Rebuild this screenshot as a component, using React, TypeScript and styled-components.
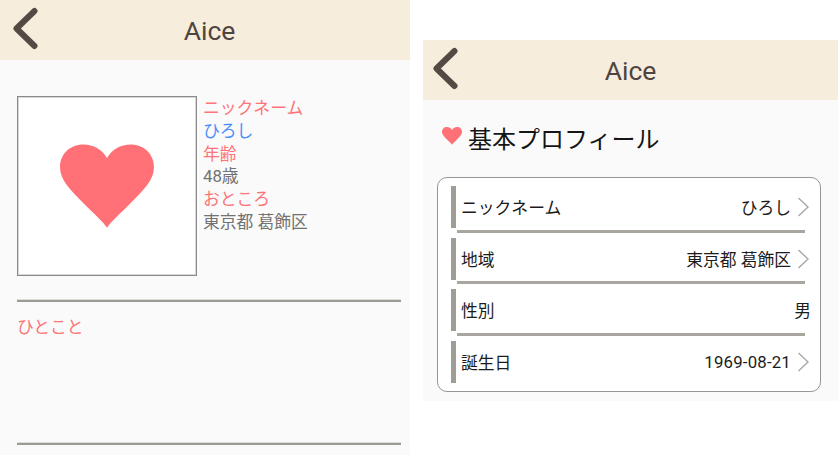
import styled, { createGlobalStyle } from 'styled-components';

const GlobalStyle = createGlobalStyle`
  html, body {
    margin: 0;
    padding: 0;
    background: #ffffff;
    font-family: Roboto, "Noto Sans CJK JP", sans-serif;
  }
`;

const Page = styled.div`
  display: flex;
  align-items: flex-start;
  gap: 13px;
  width: 838px;
  height: 455px;
  overflow: hidden;
`;

const LeftScreen = styled.section`
  width: 410px;
  height: 455px;
  flex: none;
  background: #fafafa;
`;

const RightScreen = styled.section`
  width: 415px;
  height: 361px;
  flex: none;
  margin-top: 40px;
  background: #fafafa;
`;

const Header = styled.header<{ $shift: number }>`
  position: relative;
  box-sizing: border-box;
  height: 60px;
  display: flex;
  align-items: center;
  justify-content: center;
  padding-left: ${(p) => p.$shift}px;
  background: #f6eddd;
  color: #4f453e;
  font-size: 26.5px;
`;

const BackIcon = styled.svg<{ $left: number }>`
  position: absolute;
  left: ${(p) => p.$left}px;
  top: 7px;
  width: 28px;
  height: 44px;
`;

const ProfileRow = styled.div`
  display: flex;
  gap: 6px;
  padding: 36px 0 0 17px;
`;

const Photo = styled.div`
  box-sizing: border-box;
  width: 180px;
  height: 180px;
  display: flex;
  align-items: center;
  justify-content: center;
  background: #ffffff;
  border: 1px solid #8a8a8a;
  box-shadow: inset 0 0 0 1px #d8d8d8;
`;

const BigHeart = styled.svg`
  width: 94px;
  height: 85px;
  filter: blur(0.7px);
`;

const Facts = styled.div`
  padding-top: 1px;
  font-size: 16.8px;
  line-height: 22.8px;
`;

const Fact = styled.div<{ $tone: 'label' | 'name' | 'value' }>`
  color: ${(p) =>
    p.$tone === 'label' ? '#ff7479' : p.$tone === 'name' ? '#4a8ffa' : '#727272'};
`;

const Rule = styled.hr<{ $top: number }>`
  height: 2px;
  margin: ${(p) => p.$top}px 9px 0 17px;
  border: 0;
  background: #9c9a94;
  box-shadow: 0 -1px 0 #dedcd8;
`;

const Comment = styled.div`
  margin: 14px 0 0 17px;
  height: 127px;
  color: #ff7479;
  font-size: 16.8px;
  line-height: 22px;
`;

const Heading = styled.h2`
  display: flex;
  align-items: center;
  gap: 6px;
  height: 38px;
  margin: 0;
  padding: 18px 0 0 19px;
  color: #151515;
  font-size: 24px;
  font-weight: 400;
`;

const SmallHeart = styled.svg`
  width: 20px;
  height: 18px;
  margin-top: -2px;
`;

const Card = styled.div`
  box-sizing: border-box;
  width: 384px;
  height: 215px;
  margin: 21px 0 0 14px;
  padding: 8px 9px 0 13px;
  background: #ffffff;
  border: 1px solid #969696;
  border-radius: 10px;
`;

const Row = styled.div`
  display: flex;
  flex-direction: column;
  height: 51.5px;
`;

const RowBody = styled.div`
  display: flex;
  align-items: center;
  height: 42px;
  padding-left: 5px;
  border-left: 5px solid #9f9d96;
  color: #1c1c1c;
  font-size: 16.8px;
`;

const RowLabel = styled.span`
  flex: 1;
`;

const RowValue = styled.span<{ $numeric?: boolean }>`
  letter-spacing: ${(p) => (p.$numeric ? '0.2px' : '0')};
`;

const Chevron = styled.svg`
  width: 14px;
  height: 22px;
  margin-left: 5px;
  margin-right: 1px;
`;

const RowRule = styled.div`
  height: 3px;
  margin: 1.5px 6px 0 6px;
  background: #a8a69f;
`;

const heartPath =
  'M48 85 C44 79 36 72 24 60 C10 46 0 36 0 23 C0 10 10 0 24 0 C34 0 43 5 48 14 C53 5 62 0 72 0 C86 0 96 10 96 23 C96 36 86 46 72 60 C60 72 52 79 48 85 Z';

const Back = ({ left }: { left: number }) => (
  <BackIcon $left={left} viewBox="0 0 28 44">
    <path
      d="M21.5 4 L3.5 21.5 L21.5 39"
      fill="none"
      stroke="#544a44"
      strokeWidth="6"
      strokeLinecap="round"
      strokeLinejoin="round"
    />
  </BackIcon>
);

const rows = [
  { label: 'ニックネーム', value: 'ひろし', link: true },
  { label: '地域', value: '東京都 葛飾区', link: true },
  { label: '性別', value: '男', link: false },
  { label: '誕生日', value: '1969-08-21', link: true, numeric: true },
];

export default function App() {
  return (
    <Page>
      <GlobalStyle />
      <LeftScreen>
        <Header $shift={9}>
          <Back left={13} />
          Aice
        </Header>
        <ProfileRow>
          <Photo>
            <BigHeart viewBox="0 0 96 86">
              <path d={heartPath} fill="#ff7176" />
            </BigHeart>
          </Photo>
          <Facts>
            <Fact $tone="label">ニックネーム</Fact>
            <Fact $tone="name">ひろし</Fact>
            <Fact $tone="label">年齢</Fact>
            <Fact $tone="value">48歳</Fact>
            <Fact $tone="label">おところ</Fact>
            <Fact $tone="value">東京都 葛飾区</Fact>
          </Facts>
        </ProfileRow>
        <Rule $top={24} />
        <Comment>ひとこと</Comment>
        <Rule $top={0} />
      </LeftScreen>
      <RightScreen>
        <Header $shift={-2}>
          <Back left={10} />
          Aice
        </Header>
        <Heading>
          <SmallHeart viewBox="0 0 96 86">
            <path d={heartPath} fill="#ff7176" />
          </SmallHeart>
          基本プロフィール
        </Heading>
        <Card>
          {rows.map((row, i) => (
            <Row key={row.label}>
              <RowBody>
                <RowLabel>{row.label}</RowLabel>
                <RowValue $numeric={row.numeric}>{row.value}</RowValue>
                {row.link && (
                  <Chevron viewBox="0 0 14 22">
                    <path d="M2.5 2 L12 11 L2.5 20" fill="none" stroke="#a8a8a8" strokeWidth="1.4" />
                  </Chevron>
                )}
              </RowBody>
              {i < rows.length - 1 && <RowRule />}
            </Row>
          ))}
        </Card>
      </RightScreen>
    </Page>
  );
}
